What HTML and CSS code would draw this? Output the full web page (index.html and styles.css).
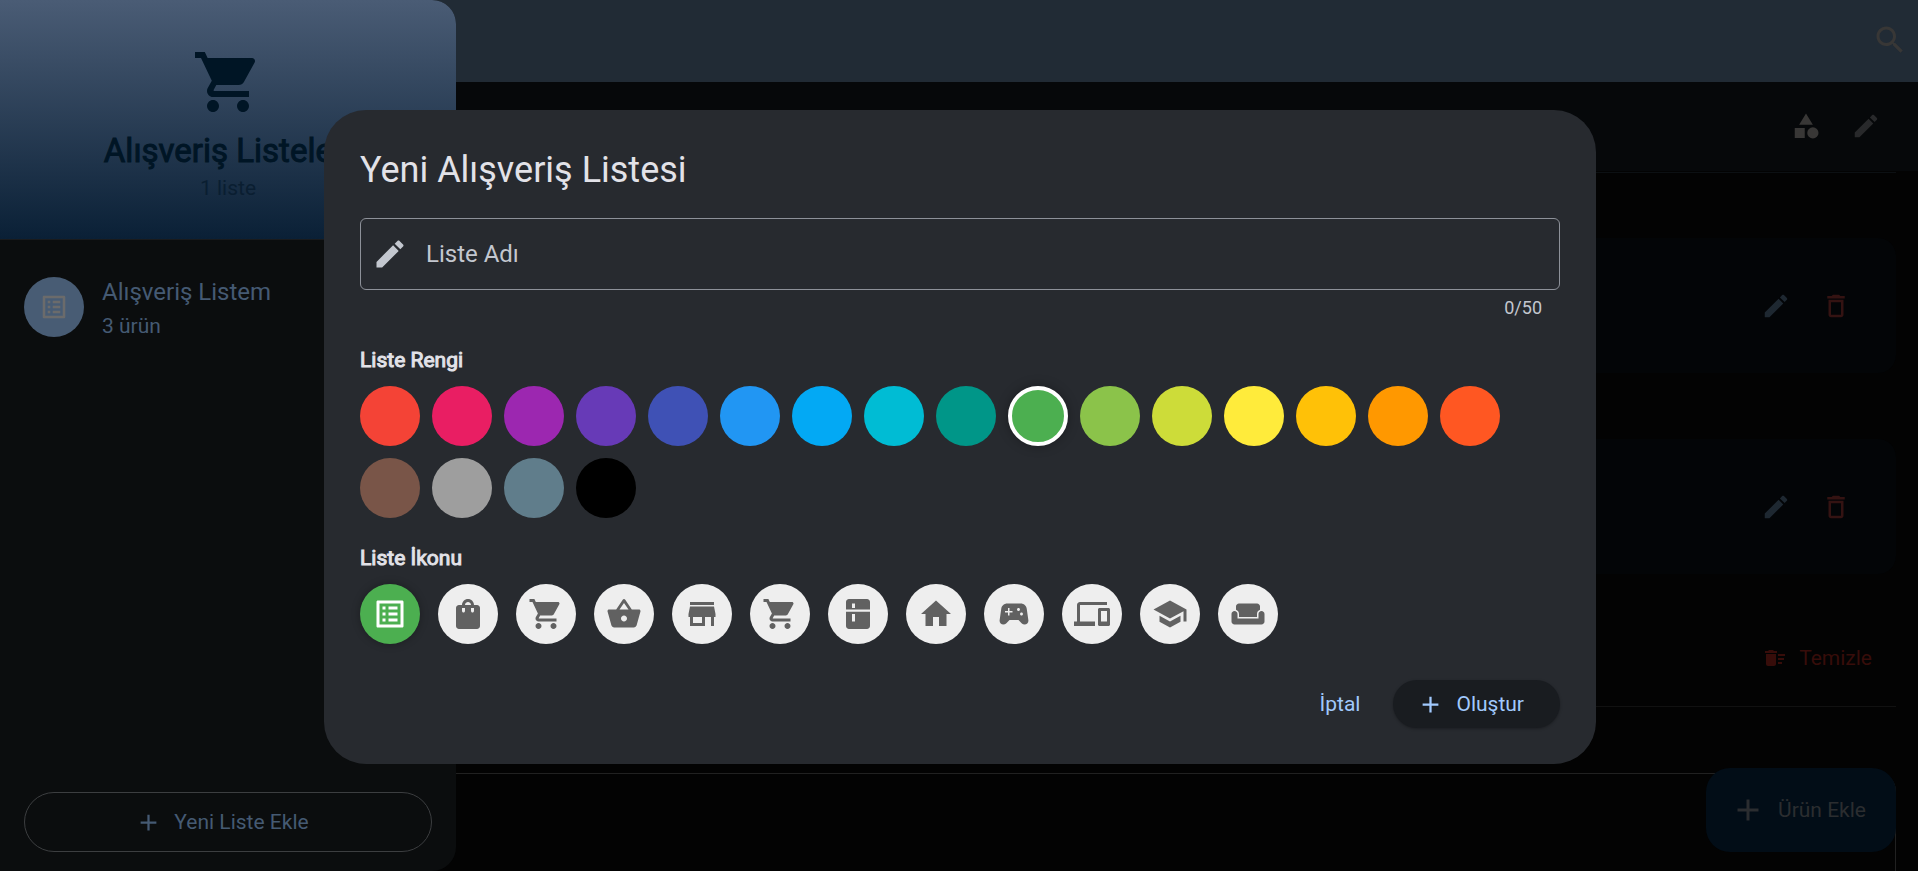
FILE: index.html
```html
<!DOCTYPE html>
<html lang="tr">
<head>
<meta charset="utf-8">
<meta name="viewport" content="width=device-width, initial-scale=1">
<title>Alışveriş Listeleri</title>
<link rel="stylesheet" href="styles.css">
</head>
<body>
<svg class="sprite" aria-hidden="true">
  <symbol id="edit" viewBox="0 0 24 24"><path d="M3 17.25V21h3.75L17.81 9.94l-3.75-3.75L3 17.25zM20.71 7.04c.39-.39.39-1.02 0-1.41l-2.34-2.34c-.39-.39-1.02-.39-1.41 0l-1.83 1.83 3.75 3.75 1.83-1.83z"/></symbol>
  <symbol id="cart" viewBox="0 0 24 24"><path d="M7 18c-1.1 0-1.99.9-1.99 2S5.9 22 7 22s2-.9 2-2-.9-2-2-2zM1 2v2h2l3.6 7.59-1.35 2.45c-.16.28-.25.61-.25.96 0 1.1.9 2 2 2h12v-2H7.42c-.14 0-.25-.11-.25-.25l.03-.12.9-1.63h7.45c.75 0 1.41-.41 1.75-1.03l3.58-6.49c.08-.14.12-.31.12-.48 0-.55-.45-1-1-1H5.21l-.94-2H1zm16 16c-1.1 0-1.99.9-1.99 2s.89 2 1.99 2 2-.9 2-2-.9-2-2-2z"/></symbol>
  <symbol id="list" viewBox="0 0 24 24"><path d="M19 5v14H5V5h14m1.1-2H3.9c-.5 0-.9.4-.9.9v16.2c0 .4.4.9.9.9h16.2c.4 0 .9-.5.9-.9V3.9c0-.5-.5-.9-.9-.9zM11 7h6v2h-6V7zm0 4h6v2h-6v-2zm0 4h6v2h-6zM7 7h2v2H7zm0 4h2v2H7zm0 4h2v2H7z"/></symbol>
  <symbol id="search" viewBox="0 0 24 24"><path d="M15.5 14h-.79l-.28-.27C15.41 12.59 16 11.11 16 9.5 16 5.91 13.09 3 9.5 3S3 5.91 3 9.5 5.91 16 9.5 16c1.61 0 3.09-.59 4.23-1.57l.27.28v.79l5 4.99L20.49 19l-4.99-5zm-6 0C7.01 14 5 11.99 5 9.5S7.01 5 9.5 5 14 7.01 14 9.5 11.99 14 9.5 14z"/></symbol>
  <symbol id="bag" viewBox="0 0 24 24"><path d="M18 6h-2c0-2.21-1.79-4-4-4S8 3.79 8 6H6c-1.1 0-2 .9-2 2v12c0 1.1.9 2 2 2h12c1.1 0 2-.9 2-2V8c0-1.1-.9-2-2-2zm-8 4c0 .55-.45 1-1 1s-1-.45-1-1V8h2v2zm2-6c1.1 0 2 .9 2 2h-4c0-1.1.9-2 2-2zm4 6c0 .55-.45 1-1 1s-1-.45-1-1V8h2v2z"/></symbol>
  <symbol id="basket" viewBox="0 0 24 24"><path d="M17.21 9l-4.38-6.56c-.19-.28-.51-.42-.83-.42-.32 0-.64.14-.83.43L6.79 9H2c-.55 0-1 .45-1 1 0 .09.01.18.04.27l2.54 9.27c.23.84 1 1.46 1.92 1.46h13c.92 0 1.69-.62 1.93-1.46l2.54-9.27L23 10c0-.55-.45-1-1-1h-4.79zM9 9l3-4.4L15 9H9zm3 8c-1.1 0-2-.9-2-2s.9-2 2-2 2 .9 2 2-.9 2-2 2z"/></symbol>
  <symbol id="store" viewBox="0 0 24 24"><path d="M20 4H4v2h16V4zm1 10v-2l-1-5H4l-1 5v2h1v6h10v-6h4v6h2v-6h1zm-9 4H6v-4h6v4z"/></symbol>
  <symbol id="fridge" viewBox="0 0 24 24"><path fill-rule="evenodd" d="M20 9V4c0-1.100-.9-2-2-2H6c-1.100 0-2 .9-2 2v5h16zM8 5h2v3H8zM4 10.500V20c0 1.100.9 2 2 2h12c1.100 0 2-.9 2-2v-9.500zM8 12h2v5H8z"/></symbol>
  <symbol id="home" viewBox="0 0 24 24"><path d="M10 20v-6h4v6h5v-8h3L12 3 2 12h3v8z"/></symbol>
  <symbol id="gamepad" viewBox="0 0 24 24"><path d="M21.58 16.09l-1.09-7.66C20.21 6.46 18.52 5 16.53 5H7.47C5.48 5 3.79 6.46 3.51 8.43l-1.09 7.66C2.2 17.63 3.39 19 4.94 19c.68 0 1.32-.27 1.8-.75L9 16h6l2.25 2.25c.48.48 1.13.75 1.8.75 1.56 0 2.75-1.37 2.53-2.91zM11 11H9v2H8v-2H6v-1h2V8h1v2h2v1zm4-1c-.55 0-1-.45-1-1s.45-1 1-1 1 .45 1 1-.45 1-1 1zm2 3c-.55 0-1-.45-1-1s.45-1 1-1 1 .45 1 1-.45 1-1 1z"/></symbol>
  <symbol id="devices" viewBox="0 0 24 24"><path d="M4 6h18V4H4c-1.1 0-2 .9-2 2v11H0v3h14v-3H4V6zm19 2h-6c-.55 0-1 .45-1 1v10c0 .55.45 1 1 1h6c.55 0 1-.45 1-1V9c0-.55-.45-1-1-1zm-1 9h-4v-7h4v7z"/></symbol>
  <symbol id="school" viewBox="0 0 24 24"><path d="M5 13.18v4L12 21l7-3.820v-4L12 17l-7-3.820zM12 3L1 9l11 6 9-4.910V17h2V9L12 3z"/></symbol>
  <symbol id="sofa" viewBox="0 0 24 24"><path d="M21 10c-1.1 0-2 .9-2 2v3H5v-3c0-1.1-.9-2-2-2s-2 .9-2 2v5c0 1.1.9 2 2 2h18c1.1 0 2-.9 2-2v-5c0-1.1-.9-2-2-2zm-3-5H6c-1.1 0-2 .9-2 2v2.150c1.160.41 2 1.510 2 2.820V14h12v-2.030c0-1.300.84-2.400 2-2.820V7c0-1.1-.9-2-2-2z"/></symbol>
  <symbol id="category" viewBox="0 0 24 24"><path d="M12 2l-5.500 9h11zM3 13.500h8v8H3z"/><circle cx="17.500" cy="17.500" r="4.500"/></symbol>
  <symbol id="delete" viewBox="0 0 24 24"><path d="M6 19c0 1.100.9 2 2 2h8c1.100 0 2-.9 2-2V7H6v12zM8 9h8v10H8V9zm7.500-5l-1-1h-5l-1 1H5v2h14V4h-3.500z"/></symbol>
  <symbol id="sweep" viewBox="0 0 24 24"><path d="M15 16h4v2h-4zm0-8h7v2h-7zm0 4h6v2h-6zM3 18c0 1.100.9 2 2 2h6c1.100 0 2-.9 2-2V8H3v10zM14 5h-3l-1-1H6L5 5H2v2h12z"/></symbol>
  <symbol id="add" viewBox="0 0 24 24"><path d="M19 13h-6v6h-2v-6H5v-2h6V5h2v6h6v2z"/></symbol>
</svg>

<main class="page">
  <header class="appbar">
    <button class="icon-button muted" aria-label="Ara"><svg class="icon-36"><use href="#search"/></svg></button>
  </header>
  <div class="toolbar">
    <button class="icon-button muted" aria-label="Kategoriler"><svg class="icon-30"><use href="#category"/></svg></button>
    <button class="icon-button dim" aria-label="Düzenle"><svg class="icon-30"><use href="#edit"/></svg></button>
  </div>
  <section class="items">
    <article class="item">
      <button class="icon-button blue" aria-label="Ürünü düzenle"><svg class="icon-30"><use href="#edit"/></svg></button>
      <button class="icon-button red" aria-label="Ürünü sil"><svg class="icon-30"><use href="#delete"/></svg></button>
    </article>
    <article class="item">
      <button class="icon-button blue" aria-label="Ürünü düzenle"><svg class="icon-30"><use href="#edit"/></svg></button>
      <button class="icon-button red" aria-label="Ürünü sil"><svg class="icon-30"><use href="#delete"/></svg></button>
    </article>
  </section>
  <div class="clear-row">
    <button class="clear-button"><svg class="icon-24"><use href="#sweep"/></svg>Temizle</button>
  </div>
  <section class="panel"></section>
  <button class="fab"><svg class="icon-36"><use href="#add"/></svg>Ürün Ekle</button>
</main>

<aside class="drawer">
  <header class="drawer-header">
    <svg class="icon-72"><use href="#cart"/></svg>
    <h1 class="drawer-title">Alışveriş Listeleri</h1>
    <p class="drawer-count">1 liste</p>
  </header>
  <nav class="drawer-nav">
    <a class="list-link" href="#">
      <span class="avatar"><svg class="icon-30"><use href="#list"/></svg></span>
      <span class="list-text"><span class="list-name">Alışveriş Listem</span><span class="list-sub">3 ürün</span></span>
    </a>
  </nav>
  <button class="new-list"><svg class="icon-27"><use href="#add"/></svg>Yeni Liste Ekle</button>
</aside>

<div class="overlay">
  <form class="dialog" role="dialog" aria-labelledby="dialog-title">
    <h2 class="dialog-title" id="dialog-title">Yeni Alışveriş Listesi</h2>
    <label class="field">
      <svg class="icon-36"><use href="#edit"/></svg>
      <input class="field-input" type="text" maxlength="50" placeholder="Liste Adı" aria-label="Liste Adı">
    </label>
    <p class="counter">0/50</p>
    <h3 class="group-title" id="color-title">Liste Rengi</h3>
    <div class="swatches" role="radiogroup" aria-labelledby="color-title">
      <input class="swatch c-red" type="radio" name="color" aria-label="Kırmızı">
      <input class="swatch c-pink" type="radio" name="color" aria-label="Pembe">
      <input class="swatch c-purple" type="radio" name="color" aria-label="Mor">
      <input class="swatch c-deep-purple" type="radio" name="color" aria-label="Koyu mor">
      <input class="swatch c-indigo" type="radio" name="color" aria-label="Çivit">
      <input class="swatch c-blue" type="radio" name="color" aria-label="Mavi">
      <input class="swatch c-light-blue" type="radio" name="color" aria-label="Açık mavi">
      <input class="swatch c-cyan" type="radio" name="color" aria-label="Camgöbeği">
      <input class="swatch c-teal" type="radio" name="color" aria-label="Turkuaz">
      <input class="swatch c-green" type="radio" name="color" aria-label="Yeşil" checked>
      <input class="swatch c-light-green" type="radio" name="color" aria-label="Açık yeşil">
      <input class="swatch c-lime" type="radio" name="color" aria-label="Limon">
      <input class="swatch c-yellow" type="radio" name="color" aria-label="Sarı">
      <input class="swatch c-amber" type="radio" name="color" aria-label="Kehribar">
      <input class="swatch c-orange" type="radio" name="color" aria-label="Turuncu">
      <input class="swatch c-deep-orange" type="radio" name="color" aria-label="Koyu turuncu">
      <input class="swatch c-brown" type="radio" name="color" aria-label="Kahverengi">
      <input class="swatch c-grey" type="radio" name="color" aria-label="Gri">
      <input class="swatch c-blue-grey" type="radio" name="color" aria-label="Mavi gri">
      <input class="swatch c-black" type="radio" name="color" aria-label="Siyah">
    </div>
    <h3 class="group-title" id="icon-title">Liste İkonu</h3>
    <div class="choices" role="radiogroup" aria-labelledby="icon-title">
      <label class="choice"><input class="choice-input" type="radio" name="icon" aria-label="Liste" checked><svg class="icon-36"><use href="#list"/></svg></label>
      <label class="choice"><input class="choice-input" type="radio" name="icon" aria-label="Çanta"><svg class="icon-36"><use href="#bag"/></svg></label>
      <label class="choice"><input class="choice-input" type="radio" name="icon" aria-label="Araba"><svg class="icon-36"><use href="#cart"/></svg></label>
      <label class="choice"><input class="choice-input" type="radio" name="icon" aria-label="Sepet"><svg class="icon-36"><use href="#basket"/></svg></label>
      <label class="choice"><input class="choice-input" type="radio" name="icon" aria-label="Mağaza"><svg class="icon-36"><use href="#store"/></svg></label>
      <label class="choice"><input class="choice-input" type="radio" name="icon" aria-label="Market"><svg class="icon-36"><use href="#cart"/></svg></label>
      <label class="choice"><input class="choice-input" type="radio" name="icon" aria-label="Mutfak"><svg class="icon-36"><use href="#fridge"/></svg></label>
      <label class="choice"><input class="choice-input" type="radio" name="icon" aria-label="Ev"><svg class="icon-36"><use href="#home"/></svg></label>
      <label class="choice"><input class="choice-input" type="radio" name="icon" aria-label="Oyun"><svg class="icon-36"><use href="#gamepad"/></svg></label>
      <label class="choice"><input class="choice-input" type="radio" name="icon" aria-label="Cihazlar"><svg class="icon-36"><use href="#devices"/></svg></label>
      <label class="choice"><input class="choice-input" type="radio" name="icon" aria-label="Okul"><svg class="icon-36"><use href="#school"/></svg></label>
      <label class="choice"><input class="choice-input" type="radio" name="icon" aria-label="Mobilya"><svg class="icon-36"><use href="#sofa"/></svg></label>
    </div>
    <div class="actions">
      <button class="text-button" type="button">İptal</button>
      <button class="primary-button" type="submit"><svg class="icon-27"><use href="#add"/></svg>Oluştur</button>
    </div>
  </form>
</div>
</body>
</html>
```
FILE: styles.css
```css
*, *::before, *::after { box-sizing: border-box; }
body {
  margin: 0;
  height: 100vh;
  overflow: hidden;
  position: relative;
  background: #030303;
  font-family: Roboto, "Noto Sans", sans-serif;
  font-size: 21px;
  line-height: 30px;
}
h1, h2, h3, p { margin: 0; }
button { border: 0; background: none; padding: 0; font: inherit; cursor: pointer; }
svg { fill: currentColor; flex: none; display: block; }
.sprite { position: absolute; width: 0; height: 0; }
.icon-24 { width: 24px; height: 24px; }
.icon-27 { width: 27px; height: 27px; }
.icon-30 { width: 30px; height: 30px; }
.icon-36 { width: 36px; height: 36px; }
.icon-72 { width: 72px; height: 72px; }

/* Page behind the dialog */
.page { height: 100%; display: flex; flex-direction: column; }
.appbar {
  flex: none;
  height: 82px;
  padding-bottom: 2px;
  display: flex;
  align-items: center;
  justify-content: flex-end;
  background: #212b35;
}
.icon-button { width: 60px; height: 60px; display: grid; place-items: center; }
.appbar .icon-button { width: 56px; }
.muted { color: #383736; }
.dim { color: #28292b; }
.blue { color: #1e2831; }
.red { color: #341312; }
.toolbar {
  flex: none;
  height: 89px;
  padding: 0 22px 2px;
  display: flex;
  align-items: center;
  justify-content: flex-end;
  background: #06080a;
}
.items {
  margin: 1px 22px 0;
  padding-top: 65px;
  border-top: 1px solid #0c1013;
  display: flex;
  flex-direction: column;
  gap: 66px;
}
.item {
  height: 135px;
  padding: 0 30px;
  display: flex;
  align-items: center;
  justify-content: flex-end;
  border-radius: 18px;
  background: #030507;
}
.clear-row {
  margin: 48px 22px 0;
  padding: 0 24px 12px 0;
  height: 85px;
  display: flex;
  align-items: center;
  justify-content: flex-end;
  border-bottom: 1px solid #111111;
}
.clear-button { display: flex; align-items: center; gap: 12px; height: 48px; color: #370d0a; }
.panel {
  flex: 1;
  margin: 66px 22px 0;
  border: solid #212121;
  border-width: 1px 1px 0;
  border-radius: 18px 18px 0 0;
}
.fab {
  position: absolute;
  right: 22px;
  bottom: 19px;
  height: 84px;
  padding: 0 30px 0 24px;
  display: flex;
  align-items: center;
  gap: 12px;
  border-radius: 24px;
  background: #020d17;
  color: #2b2d30;
}

/* Drawer */
.drawer {
  position: absolute;
  inset: 0 auto 0 0;
  width: 456px;
  display: flex;
  flex-direction: column;
  border-radius: 0 24px 24px 0;
  overflow: hidden;
  background: #0b0d0e;
  color: #455a73;
}
.drawer-header {
  height: 240px;
  padding-top: 46px;
  display: flex;
  flex-direction: column;
  align-items: center;
  border-bottom: 1px solid #191b1d;
  background: linear-gradient(#4a5c75, #0a2036);
  color: #001525;
}
.drawer-title {
  margin-top: 9px;
  font-size: 33px;
  line-height: 48px;
  font-weight: 400;
  -webkit-text-stroke: 1px currentColor;
}
.drawer-count { color: #0a1e31; line-height: 26px; }
.drawer-nav { flex: 1; padding: 32px 24px; }
.list-link { display: flex; align-items: center; gap: 18px; color: inherit; text-decoration: none; }
.avatar {
  width: 60px;
  height: 60px;
  display: grid;
  place-items: center;
  border-radius: 50%;
  background: #485c74;
  color: #6b6b6b;
}
.list-text { display: flex; flex-direction: column; padding-top: 2px; }
.list-name { font-size: 24px; line-height: 36px; }
.list-sub { line-height: 32px; }
.new-list {
  margin: 0 24px 19px;
  height: 60px;
  padding: 0 36px 0 24px;
  display: flex;
  align-items: center;
  justify-content: center;
  gap: 12px;
  border: 1px solid #3c3e40;
  border-radius: 30px;
  color: #455a73;
}

/* Dialog */
.overlay {
  position: absolute;
  inset: 0;
  padding: 110px 60px 60px 62px;
  display: flex;
  align-items: flex-start;
  justify-content: center;
}
.dialog {
  width: 1272px;
  max-width: 100%;
  padding: 36px;
  border-radius: 42px;
  background: #272a2f;
  color: #e2e2e8;
}
.dialog-title { font-size: 36px; line-height: 48px; font-weight: 400; }
.field {
  margin-top: 24px;
  height: 72px;
  padding: 0 11px;
  display: flex;
  align-items: center;
  gap: 18px;
  border: 1px solid #8d9199;
  border-radius: 6px;
  color: #c3c7cf;
}
.field-input {
  flex: 1;
  min-width: 0;
  padding: 0;
  border: 0;
  outline: 0;
  background: none;
  font: inherit;
  font-size: 24px;
  color: inherit;
}
.field-input::placeholder { color: inherit; opacity: 1; }
.counter {
  margin: 6px 18px 24px;
  font-size: 18px;
  line-height: 24px;
  text-align: right;
  color: #c3c7cf;
}
.group-title {
  margin-bottom: 10px;
  font-size: 21px;
  line-height: 32px;
  font-weight: 400;
  -webkit-text-stroke: 1px currentColor;
}
.swatches { display: flex; flex-wrap: wrap; gap: 12px; margin-bottom: 24px; }
.swatch { appearance: none; width: 60px; height: 60px; margin: 0; border-radius: 50%; }
.swatch:checked { border: 4px solid #ffffff; box-shadow: 0 0 12px rgba(0, 0, 0, 0.3); }
.c-red { background: #f44336; }
.c-pink { background: #e91e63; }
.c-purple { background: #9c27b0; }
.c-deep-purple { background: #673ab7; }
.c-indigo { background: #3f51b5; }
.c-blue { background: #2196f3; }
.c-light-blue { background: #03a9f4; }
.c-cyan { background: #00bcd4; }
.c-teal { background: #009688; }
.c-green { background: #4caf50; }
.c-light-green { background: #8bc34a; }
.c-lime { background: #cddc39; }
.c-yellow { background: #ffeb3b; }
.c-amber { background: #ffc107; }
.c-orange { background: #ff9800; }
.c-deep-orange { background: #ff5722; }
.c-brown { background: #795548; }
.c-grey { background: #9e9e9e; }
.c-blue-grey { background: #607d8b; }
.c-black { background: #000000; }
.choices { display: flex; flex-wrap: wrap; gap: 18px; }
.choice {
  width: 60px;
  height: 60px;
  display: grid;
  place-items: center;
  border-radius: 50%;
  background: #eeeeee;
  color: #616161;
}
.choice:has(:checked) { background: #4caf50; color: #ffffff; box-shadow: 0 0 9px rgba(0, 0, 0, 0.3); }
.choice-input { appearance: none; position: absolute; margin: 0; }
.actions { margin-top: 36px; display: flex; justify-content: flex-end; gap: 15px; }
.text-button, .primary-button { height: 48px; color: #a1c9fd; }
.text-button { padding: 0 18px; }
.primary-button {
  padding: 0 36px 0 24px;
  display: flex;
  align-items: center;
  gap: 12px;
  border-radius: 24px;
  background: #191c20;
  box-shadow: 0 1px 3px rgba(0, 0, 0, 0.3);
}
```
